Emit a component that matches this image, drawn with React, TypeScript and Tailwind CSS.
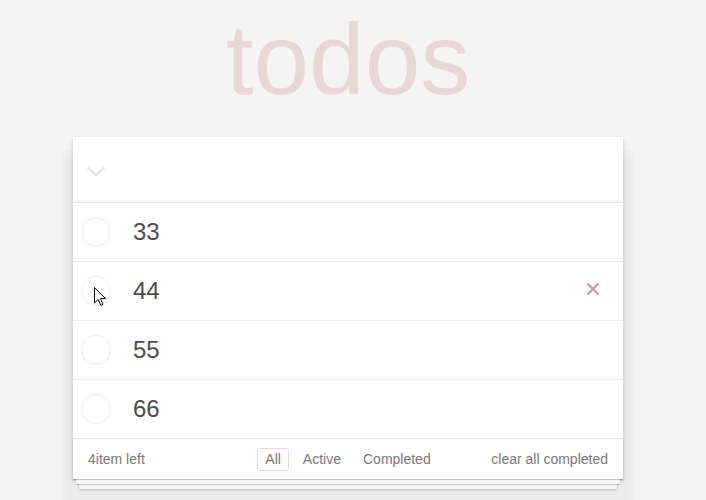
import React from "react";

const todos = [
  { id: 1, title: "33" },
  { id: 2, title: "44", hovered: true },
  { id: 3, title: "55" },
  { id: 4, title: "66" },
];

function Cursor() {
  return (
    <svg
      width="13"
      height="20"
      viewBox="0 0 13 20"
      className="absolute left-[21px] top-[25px] pointer-events-none"
    >
      <path
        d="M0.5 0.5 L0.5 16 L4.2 12.4 L6.8 18.4 L9 17.4 L6.4 11.5 L11.5 11.5 Z"
        fill="#fff"
        stroke="#000"
        strokeWidth="1"
        strokeLinejoin="round"
      />
    </svg>
  );
}

function TodoItem({ title, hovered }: { title: string; hovered?: boolean }) {
  return (
    <li className="relative flex items-center h-[59px] last:h-[58px] border-b border-[#ededed] last:border-b-0">
      <span className="ml-[8px] w-[30px] h-[30px] shrink-0 rounded-full border border-[#ededed]" />
      <label className="ml-[22px] mb-[2px] flex-1 text-[24px] leading-[29px] text-[#4d4d4d]">{title}</label>
      {hovered && (
        <>
          <svg width="14" height="14" viewBox="0 0 14 14" className="mr-[23px] mb-[4px]">
            <path d="M1.5 1.5 L12.5 12.5 M12.5 1.5 L1.5 12.5" stroke="#cc9a9a" strokeWidth="2.2" />
          </svg>
          <Cursor />
        </>
      )}
    </li>
  );
}

export default function App() {
  return (
    <div className="min-h-[500px] bg-[#f4f4f4] font-['Liberation_Sans',Arial,sans-serif] overflow-hidden">
      <div className="w-[550px] ml-[73px] pt-[9px]">
        <h1 className="text-center text-[100px] leading-[100px] font-thin text-[rgba(175,47,47,0.15)]">
          todos
        </h1>

        <section className="mt-[28px] bg-white shadow-[0_2px_4px_rgba(0,0,0,0.2),0_26px_4px_11px_rgba(0,0,0,0.04)]">
          <header className="h-[65px] flex items-center shadow-[inset_0_-2px_1px_rgba(0,0,0,0.03)]">
            <svg width="20" height="11" viewBox="0 0 20 11" className="ml-[13px] mt-[3px]">
              <path d="M1.5 1.5 L10 9 L18.5 1.5" fill="none" stroke="#e6e6e6" strokeWidth="2.6" />
            </svg>
          </header>

          <ul className="border-t border-[#e6e6e6]">
            {todos.map((t) => (
              <TodoItem key={t.id} title={t.title} hovered={t.hovered} />
            ))}
          </ul>

          <footer className="h-[41px] px-[15px] border-t border-[#e6e6e6] grid grid-cols-[1fr_auto_1fr] items-center text-[14px] text-[#777] bg-white shadow-[0_1px_1px_rgba(0,0,0,0.2),0_8px_0_-3px_#f6f6f6,0_9px_1px_-3px_rgba(0,0,0,0.2),0_16px_0_-6px_#f6f6f6,0_17px_2px_-6px_rgba(0,0,0,0.2)]">
            <span className="justify-self-start">4item left</span>
            <ul className="flex">
              <li>
                <a className="mx-[3px] px-[7px] h-[23px] flex items-center rounded-[3px] border border-[rgba(175,47,47,0.2)]">
                  All
                </a>
              </li>
              <li>
                <a className="mx-[3px] px-[7px] h-[23px] flex items-center rounded-[3px] border border-transparent">
                  Active
                </a>
              </li>
              <li>
                <a className="mx-[3px] px-[7px] h-[23px] flex items-center rounded-[3px] border border-transparent">
                  Completed
                </a>
              </li>
            </ul>
            <span className="justify-self-end">clear all completed</span>
          </footer>
        </section>
      </div>
    </div>
  );
}
